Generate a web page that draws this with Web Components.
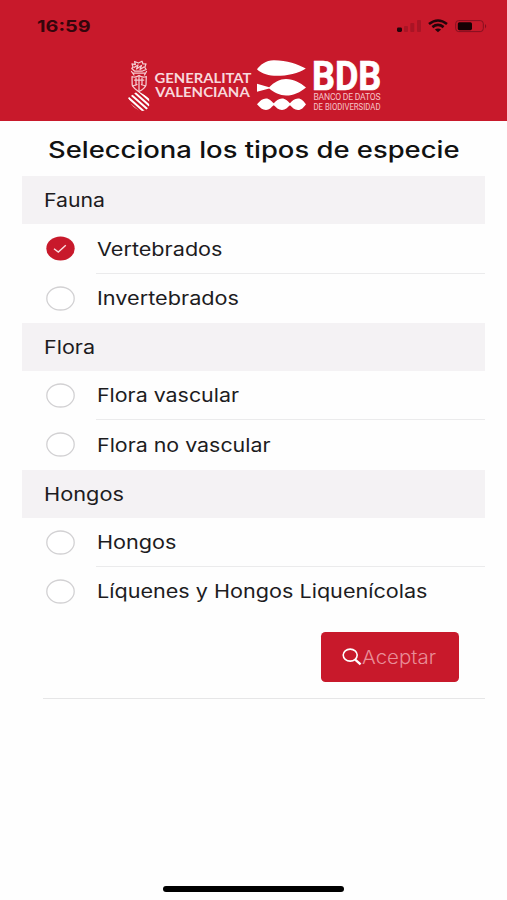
<!DOCTYPE html>
<html lang="es">
<head>
<meta charset="utf-8">
<title>Tipos de especie</title>
<style>
html,body{margin:0;height:100%;background:#fefefe;overflow:hidden}
body{font-family:Inter,"Liberation Sans",sans-serif}
</style>
</head>
<body>
<species-app></species-app>
<script>
const define = (name, html, setup) => customElements.define(name, class extends HTMLElement {
  connectedCallback() {
    if (this.shadowRoot) return;
    const t = document.createElement('template');
    t.innerHTML = html;
    this.attachShadow({mode: 'open'}).append(t.content.cloneNode(true));
    if (setup) setup(this, this.shadowRoot);
  }
});

// A line of text stretched to the width given in its "w" attribute.
define('wide-text', `<style>
:host{display:block;flex:none;line-height:0}
svg{display:block;overflow:visible}
</style><svg><text lengthAdjust="spacingAndGlyphs"></text></svg>`, (el, root) => {
  const size = +(el.getAttribute('size') || 18.6), w = el.getAttribute('w');
  const svg = root.querySelector('svg'), text = root.querySelector('text');
  const cap = size * 0.727;
  svg.setAttribute('width', w);
  svg.setAttribute('height', cap);
  text.setAttribute('y', cap);
  text.setAttribute('font-size', size);
  text.setAttribute('font-weight', el.getAttribute('weight') || 400);
  text.setAttribute('fill', 'currentColor');
  text.setAttribute('textLength', w);
  text.textContent = el.getAttribute('text');
});

define('status-bar', `<style>
:host{display:flex;align-items:center;justify-content:space-between;height:52px;padding:0 18px 0 37px;box-sizing:border-box;color:#35050b}
svg{display:block}
</style>
<wide-text text="16:59" w="53.5" size="16.2" weight="700"></wide-text>
<svg width="92" height="18" viewBox="0 0 92 18">
<rect x="0" y="10.5" width="5" height="4.5" rx="1.4" fill="#22040a"/>
<g fill="#a91425"><rect x="7" y="9" width="4" height="6" rx="1"/><rect x="13.3" y="6" width="4" height="9" rx="1"/><rect x="20" y="3" width="4" height="12" rx="1"/></g>
<g fill="none" stroke="#22040a" stroke-width="2.6"><path d="M32 7.1Q41 -.1 50 7.1"/><path d="M35.4 10.1Q41 5.8 46.6 10.1"/></g>
<path d="M37.9 12.5Q41 10.3 44.1 12.5L41 15.2Z" fill="#22040a"/>
<rect x="58.7" y="3.6" width="27.6" height="11" rx="3" fill="none" stroke="#851020"/>
<rect x="60.8" y="5.2" width="14.2" height="8" rx="1.6" fill="#150104"/>
<path d="M88 7V11.4Q90.4 9.2 88 7Z" fill="#851020"/>
</svg>`);

define('brand-logos', `<style>
:host{display:block;width:256px;height:58px;margin-left:127px}
svg{display:block;overflow:visible}
</style>
<svg width="256" height="58" viewBox="127 56 256 58" fill="#fff">
<g fill="none" stroke="#f6cdd2" stroke-width="1.25" stroke-linecap="round" stroke-linejoin="round">
<path d="M133 67L132 63.8L135.4 64.6L134.6 61.5L138.5 63L142 61.2L143 64L146 63.8L144.8 67.5L146.2 69.5L142.5 71H134.5L131.8 68.5Z"/>
<path d="M134 67.5L138 65L136.5 69L141.5 65.5L140 69.5L144 67M133 73H145.5M131.5 71.5L134 75M146.5 71.5L144.5 75"/>
<path d="M132 76.5Q135.5 78 139 75.5Q142.5 78 146.3 76.5L146 85Q145 88.5 139 91.5Q133.5 88.5 132.2 85Z"/>
<path d="M139 76V90.5M134.5 80H143.8M136 78V85M142 78V85M132.5 86L137 84.5M145.5 86L141.5 84.5"/>
</g>
<clipPath id="shield"><path d="M128 98L137.8 91L149.2 97.8V105.5Q147.6 110.7 142 111Q135.7 110 131.5 104.3Z"/></clipPath>
<g clip-path="url(#shield)" stroke="#fff" stroke-width="2"><path d="M137 89.5L153 103.5M133.5 91.6L151 107M130 93.8L149 110.5M127 96.4L145 112.4M124 99L140 113"/></g>
<g font-family="Lato, sans-serif" font-weight="700" font-size="13.4" fill="#f8d8dc">
<text x="154.5" y="83" textLength="97" lengthAdjust="spacingAndGlyphs">GENERALITAT</text>
<text x="155.3" y="97" textLength="94.5" lengthAdjust="spacingAndGlyphs">VALENCIANA</text>
</g>
<path d="M257 69.3C260 65 266 60.1 274 60.2C287 60.2 298 64.4 305.8 68.4C298 73.5 286 76.2 274 75.8C266 75.2 260 72.5 257 69.3Z"/>
<path d="M257 83.8L269.2 87.2C274 82.3 280 79 286 79C294 79 300 82.6 306 87.5C300 92.2 294 95.6 286 95.6C280 95.6 274 92.5 269.2 88.6L257 91.8Z"/>
<path d="M257 104.2C260 100.7 262.5 98.4 266 98.4C269.5 98.4 271 101 273.8 103.2C276 101 278.5 98.4 282 98.4C285.5 98.4 287.5 101 290 103.2C292 101 294.5 98.4 298 98.4C301.5 98.4 303.5 101 306 104.2C303.5 107.5 301.5 110 298 110C294.5 110 292 107.4 290 105.3C287.5 107.4 285.5 110 282 110C278.5 110 276 107.4 273.8 105.3C271 107.4 269.5 110 266 110C262.5 110 260 107.5 257 104.2Z"/>
<g font-family="Roboto, sans-serif">
<text x="312" y="89.6" font-size="40" font-weight="700" textLength="69.3" lengthAdjust="spacingAndGlyphs" stroke="#fff" stroke-width=".7">BDB</text>
<g font-size="8.8" fill="#f6c5ca">
<text x="313.5" y="100.2" textLength="67" lengthAdjust="spacing" font-size="8.6">BANCO DE DATOS</text>
<text x="313.5" y="109.8" textLength="67" lengthAdjust="spacingAndGlyphs">DE BIODIVERSIDAD</text>
</g></g>
</svg>`);

define('app-header', `<style>
:host{display:block;height:121.4px;background:#c8192b;flex:none}
brand-logos{margin-top:4px}
</style><status-bar></status-bar><brand-logos></brand-logos>`);

define('option-group', `<style>
:host{display:block}
header{display:flex;align-items:center;height:48px;padding-left:22px;background:#f4f2f4;color:#1d1c1e}
</style><header></header><slot></slot>`, (el, root) => {
  root.querySelector('header').innerHTML =
    `<wide-text text="${el.getAttribute('label')}" w="${el.getAttribute('w')}"></wide-text>`;
});

define('option-row', `<style>
:host{display:flex;height:49.35px;padding-left:24px;align-items:center;box-sizing:border-box}
svg{display:block;flex:none}
div{flex:1;display:flex;align-items:center;align-self:stretch;margin-left:21px;padding-left:1px;box-sizing:border-box;border-bottom:1px solid #ebebec}
:host(:last-child) div{border-color:transparent}
.on,:host([checked]) .off{display:none}
:host([checked]) .on{display:inline}
</style>
<svg width="29" height="25" viewBox="0 0 29 25">
<ellipse class="off" cx="14.5" cy="12.5" rx="13.7" ry="11.5" fill="#fff" stroke="#d2d1d3" stroke-width="1.3"/>
<g class="on"><ellipse cx="14.5" cy="12.5" rx="14.2" ry="12" fill="#c8192b"/><path d="M8 12.7L12.3 16L19.8 9.2" fill="none" stroke="#fbdfe2" stroke-width="1.4"/></g>
</svg><div></div>`, (el, root) => {
  root.querySelector('div').innerHTML =
    `<wide-text text="${el.getAttribute('label')}" w="${el.getAttribute('w')}"></wide-text>`;
});

define('accept-button', `<style>
:host{display:block}
button{all:unset;box-sizing:border-box;display:flex;align-items:center;width:138px;height:50px;padding-left:21px;border-radius:4.5px;background:#c8192b;color:#e98d97}
svg{display:block;margin-right:.5px}
</style><button><svg width="20" height="18" viewBox="0 0 20 18" fill="none" stroke="#fff"><ellipse cx="8.2" cy="7.1" rx="7" ry="6" stroke-width="1.6"/><path d="M12.9 11.4L18.6 16.3" stroke-width="2.4"/></svg><wide-text text="Aceptar" w="74" weight="300"></wide-text></button>`);

define('species-app', `<style>
:host{display:flex;flex-direction:column;height:900px;color:#1d1c1e;box-sizing:border-box}
h1{margin:0;padding:19.5px 0 0 48px;height:54.8px;box-sizing:border-box;color:#111;font-weight:inherit}
main{flex:1}
section{margin:0 22px 0 22.4px}
option-group,.actions{position:static}
.actions{display:flex;justify-content:flex-end;margin:16px 0 0 21px;padding:0 26.5px 16px 0;border-bottom:1px solid #e6e6e7}
.home{width:181px;height:6px;border-radius:3px;background:#000;margin:0 auto 8px}
</style>
<app-header></app-header>
<main>
<h1><wide-text text="Selecciona los tipos de especie" w="411.5" size="23" weight="500"></wide-text></h1>
<section>
<option-group label="Fauna" w="61"><option-row label="Vertebrados" w="125.5" checked></option-row><option-row label="Invertebrados" w="142"></option-row></option-group>
<option-group label="Flora" w="51"><option-row label="Flora vascular" w="142"></option-row><option-row label="Flora no vascular" w="173.5"></option-row></option-group>
<option-group label="Hongos" w="80"><option-row label="Hongos" w="79.5"></option-row><option-row label="Líquenes y Hongos Liquenícolas" w="330.5"></option-row></option-group>
<div class="actions"><accept-button></accept-button></div>
</section>
</main>
<div class="home"></div>`);
</script>
</body>
</html>
